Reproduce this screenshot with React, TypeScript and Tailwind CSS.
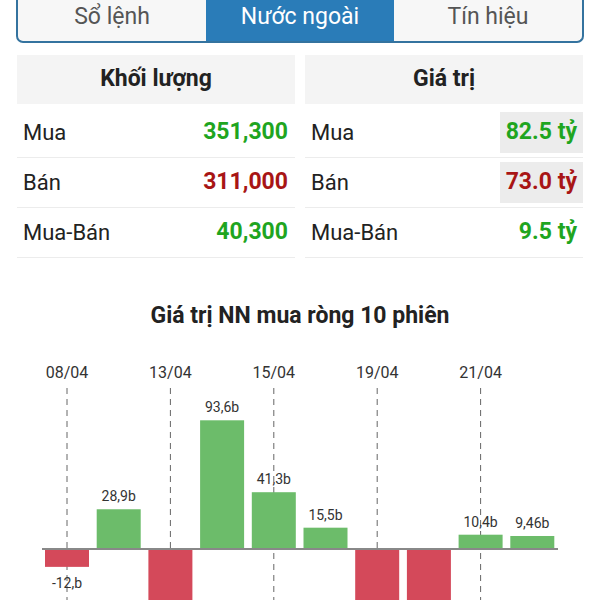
import React from "react"

const bars = [
  { v: -13, label: "-12,b" },
  { v: 28.9, label: "28,9b" },
  { v: -60, label: "" },
  { v: 93.6, label: "93,6b" },
  { v: 41.3, label: "41,3b" },
  { v: 15.5, label: "15,5b" },
  { v: -60, label: "" },
  { v: -60, label: "" },
  { v: 10.4, label: "10,4b" },
  { v: 9.46, label: "9,46b" },
]

const dates = ["08/04", "13/04", "15/04", "19/04", "21/04"]

const rows = [
  { label: "Mua", vol: "351,300", val: "82.5 tỷ", color: "text-[#1fa51f]", box: true },
  { label: "Bán", vol: "311,000", val: "73.0 tỷ", color: "text-[#a81515]", box: true },
  { label: "Mua-Bán", vol: "40,300", val: "9.5 tỷ", color: "text-[#1fa51f]", box: false },
]

function Tabs() {
  const tabs = ["Sổ lệnh", "Nước ngoài", "Tín hiệu"]
  return (
    <div className="mx-[16px] flex h-[43px] overflow-hidden rounded-b-[7px] border-x-2 border-b-2 border-[#34739f] bg-[#f7f7f7]">
      {tabs.map((t, i) => (
        <div
          key={t}
          className={`flex flex-1 justify-center pt-[2px] text-[23px] leading-[30px] ${
            i === 1 ? "bg-[#2a7cb8] text-white" : "text-[#555]"
          }`}
        >
          {t}
        </div>
      ))}
    </div>
  )
}

function Table({ title, kind }: { title: string; kind: "vol" | "val" }) {
  return (
    <div className="flex flex-col">
      <div className="flex h-[49px] items-center justify-center bg-[#f4f4f4] text-[23px] font-bold text-[#222]">
        {title}
      </div>
      <div className="mt-[4px]">
        {rows.map((r) => (
          <div key={r.label} className="flex h-[50px] items-center justify-between border-b border-[#ececec] pl-[6px]">
            <span className="text-[22px] text-[#222]">{r.label}</span>
            {kind === "vol" ? (
              <span className={`pr-[7px] text-[23px] font-bold ${r.color}`}>{r.vol}</span>
            ) : (
              <span
                className={`flex h-[41px] items-center px-[6px] text-[23px] font-bold ${r.color} ${
                  r.box ? "bg-[#ececec]" : ""
                }`}
              >
                {r.val}
              </span>
            )}
          </div>
        ))}
      </div>
    </div>
  )
}

function Chart() {
  const zero = 209
  const scale = 1.375
  return (
    <svg width="600" height="260" className="mt-[10px] block" style={{ fontFamily: "Roboto, sans-serif" }}>
      {dates.map((d, k) => {
        const x = 67 + 103.4 * k
        return (
          <g key={d}>
            <text x={x} y={38} textAnchor="middle" fontSize="16" fill="#333">
              {d}
            </text>
            <line x1={x} y1={48} x2={x} y2={260} stroke="#666" strokeWidth="1" strokeDasharray="6 5" />
          </g>
        )
      })}
      {bars.map((b, i) => {
        const x = 45 + 51.7 * i
        const h = Math.abs(b.v) * scale
        const pos = b.v >= 0
        return (
          <g key={i}>
            <rect x={x} y={pos ? zero - h : zero} width={44} height={h} fill={pos ? "#6cbc6a" : "#d4495a"} />
            {b.label && (
              <text
                x={x + 22}
                y={pos ? zero - h - 8 : zero + h + 21}
                textAnchor="middle"
                fontSize="14"
                fill="#333"
              >
                {b.label}
              </text>
            )}
          </g>
        )
      })}
      <line x1={42} y1={zero} x2={558} y2={zero} stroke="#888" strokeWidth="2" />
    </svg>
  )
}

export default function App() {
  return (
    <div className="h-[600px] w-[600px] overflow-hidden bg-white font-['Roboto',sans-serif]">
      <Tabs />
      <div className="mx-[17px] mt-[12px] grid grid-cols-2 gap-[10px]">
        <Table title="Khối lượng" kind="vol" />
        <Table title="Giá trị" kind="val" />
      </div>
      <div className="mt-[44px] text-center text-[23px] font-bold leading-[28px] text-[#222]">
        Giá trị NN mua ròng 10 phiên
      </div>
      <Chart />
    </div>
  )
}
